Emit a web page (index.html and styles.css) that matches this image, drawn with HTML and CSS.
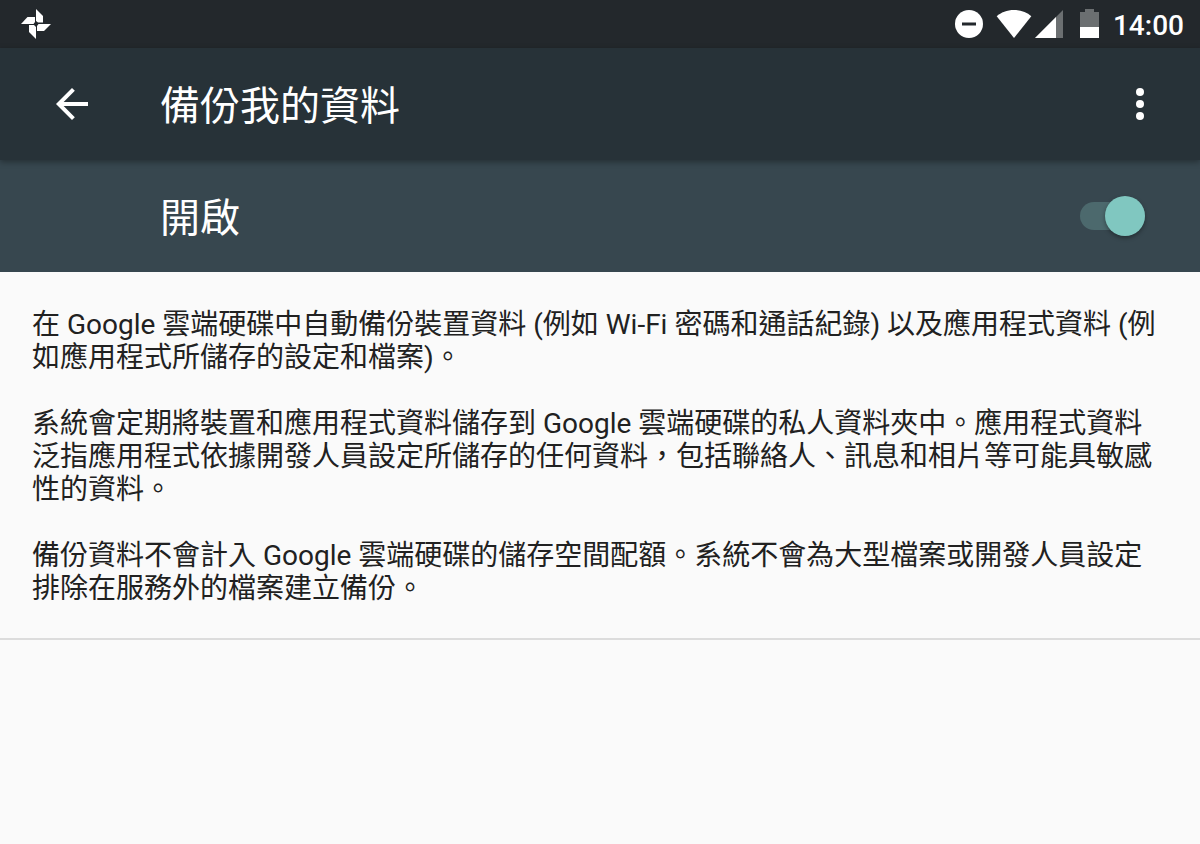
FILE: index.html
```html
<!DOCTYPE html>
<html lang="zh-Hant">
<head>
  <meta charset="UTF-8">
  <meta name="viewport" content="width=device-width, initial-scale=1">
  <title>備份我的資料</title>
  <link rel="stylesheet" href="styles.css">
</head>
<body>

  <div class="status-bar">
    <svg class="pinwheel" width="30" height="30" viewBox="0 0 30 30" fill="#fff" aria-hidden="true">
      <path d="M15 0L22 7V13.500L17 13.500L15 12Z"/>
      <path d="M30 15L23 22H16V17L17.500 15Z"/>
      <path d="M15 30L8 23V16H13L15 18Z"/>
      <path d="M0 15L6.500 8H14V13L12.500 15Z"/>
    </svg>

    <div class="status-icons">
      <svg width="28" height="28" viewBox="0 0 28 28" aria-hidden="true">
        <circle cx="14" cy="14" r="14" fill="#fff"/>
        <rect x="7" y="12.5" width="14" height="3" fill="#23282c"/>
      </svg>
      <svg class="wifi" width="36" height="28" viewBox="0 0 36 28" aria-hidden="true">
        <path d="M18 28L.7 6.2C5 2.500 11 0 18 0S31 2.500 35.300 6.200Z" fill="#fff"/>
      </svg>
      <svg class="signal" width="28" height="28" viewBox="0 0 28 28" aria-hidden="true">
        <path d="M28 0V28H0Z" fill="#6b6f71"/>
        <path d="M21 7V28H0Z" fill="#fff"/>
      </svg>
      <svg class="battery" width="20" height="30" viewBox="0 0 20 30" aria-hidden="true">
        <path d="M5 0H14V3H19V18H0V3H5Z" fill="#6b6f71"/>
        <path d="M0 18H19V29H0Z" fill="#fff"/>
      </svg>
      <span class="clock">14:00</span>
    </div>
  </div>

  <header class="toolbar">
    <button class="icon-btn" type="button" aria-label="返回">
      <svg width="48" height="48" viewBox="0 0 24 24" fill="#fff">
        <path d="M20 11H7.830l5.590-5.590L12 4l-8 8 8 8 1.410-1.410L7.830 13H20v-2z"/>
      </svg>
    </button>
    <h1>備份我的資料</h1>
    <button class="icon-btn" type="button" aria-label="更多選項">
      <svg width="48" height="48" viewBox="0 0 24 24" fill="#fff">
        <circle cx="12" cy="6" r="2"/>
        <circle cx="12" cy="12" r="2"/>
        <circle cx="12" cy="18" r="2"/>
      </svg>
    </button>
  </header>

  <div class="switch-bar">
    <label for="backupSwitch">開啟</label>
    <input type="checkbox" id="backupSwitch" class="switch" role="switch" checked>
  </div>

  <main class="content">
    <p>在 Google 雲端硬碟中自動備份裝置資料 (例如 Wi-Fi 密碼和通話紀錄) 以及應用程式資料 (例如應用程式所儲存的設定和檔案)。</p>
    <p>系統會定期將裝置和應用程式資料儲存到 Google 雲端硬碟的私人資料夾中。應用程式資料泛指應用程式依據開發人員設定所儲存的任何資料，包括聯絡人、訊息和相片等可能具敏感性的資料。</p>
    <p>備份資料不會計入 Google 雲端硬碟的儲存空間配額。系統不會為大型檔案或開發人員設定排除在服務外的檔案建立備份。</p>
  </main>

</body>
</html>
```

FILE: styles.css
```css
* {
  box-sizing: border-box;
}

body {
  margin: 0;
  background-color: #fafafa;
  color: #212121;
  font-family: Roboto, "Noto Sans CJK TC", sans-serif;
}

.status-bar {
  display: flex;
  align-items: center;
  justify-content: space-between;
  height: 48px;
  padding: 0 16px 0 21px;
  background-color: #23282c;
}

.status-icons {
  display: flex;
  align-items: center;
}

.wifi {
  margin-left: 13px;
}

.signal {
  margin-left: 3px;
}

.battery {
  margin-left: 17px;
}

.clock {
  margin-left: 13px;
  padding-top: 4px;
  color: #fff;
  font-size: 28px;
  font-weight: 500;
  line-height: 44px;
}

.toolbar {
  position: relative;
  display: flex;
  align-items: center;
  height: 112px;
  padding: 0 36px 0 48px;
  background-color: #273238;
  box-shadow: 0 2px 6px rgba(0, 0, 0, 0.35);
}

.toolbar h1 {
  flex: 1;
  margin: 0 0 0 64px;
  padding-top: 5px;
  color: #fff;
  font-size: 40px;
  font-weight: 400;
  line-height: 56px;
}

.icon-btn {
  width: 48px;
  height: 48px;
  padding: 0;
  border: none;
  background: none;
  cursor: pointer;
}

.icon-btn svg {
  display: block;
}

.switch-bar {
  display: flex;
  align-items: center;
  height: 112px;
  padding: 0 55px 0 160px;
  background-color: #37474f;
}

.switch-bar label {
  flex: 1;
  padding-top: 5px;
  color: #fff;
  font-size: 40px;
  line-height: 56px;
}

.switch {
  appearance: none;
  position: relative;
  width: 65px;
  height: 28px;
  margin: 0;
  border-radius: 14px;
  background-color: #4c696d;
  cursor: pointer;
}

.switch::before {
  content: "";
  position: absolute;
  top: -6px;
  left: 0;
  width: 40px;
  height: 40px;
  border-radius: 50%;
  background-color: #b9b9b9;
  box-shadow: 0 2px 4px rgba(0, 0, 0, 0.35);
}

.switch:checked::before {
  left: auto;
  right: 0;
  background-color: #80c7c0;
}

.content {
  padding: 36px 32px 33px;
  border-bottom: 2px solid #dcdcdc;
  font-size: 28px;
  line-height: 33px;
}

.content p {
  margin: 0 0 33px;
}

.content p:last-child {
  margin-bottom: 0;
}
```
